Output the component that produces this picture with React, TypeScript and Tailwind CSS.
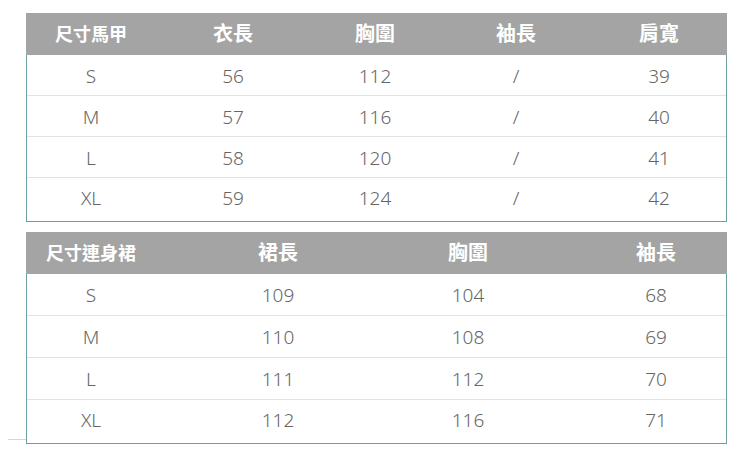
import React from "react";

const font = { fontFamily: '"Noto Sans", "Noto Sans CJK TC", sans-serif' };

const vestCols = ["w-[130px]", "w-[154px]", "w-[130px]", "w-[152px]", "w-[134px]"];
const dressCols = ["w-[130px]", "w-[244px]", "w-[136px]", "w-[190px] pl-[50px]"];

const vestHead = ["尺寸馬甲", "衣長", "胸圍", "袖長", "肩寬"];
const vestRows = [
  ["S", "56", "112", "/", "39"],
  ["M", "57", "116", "/", "40"],
  ["L", "58", "120", "/", "41"],
  ["XL", "59", "124", "/", "42"],
];

const dressHead = ["尺寸連身裙", "裙長", "胸圍", "袖長"];
const dressRows = [
  ["S", "109", "104", "68"],
  ["M", "110", "108", "69"],
  ["L", "111", "112", "70"],
  ["XL", "112", "116", "71"],
];

interface SizeTableProps {
  cols: string[];
  head: string[];
  rows: string[][];
  rowH: string;
}

const SizeTable: React.FC<SizeTableProps> = ({ cols, head, rows, rowH }) => {
  return (
    <div className="w-[701px]">
      <div className="flex h-[42px] items-center bg-[#a4a4a4] text-white font-bold">
        {head.map((h, i) => (
          <div
            key={h}
            className={`${cols[i]} text-center ${i === 0 ? "text-[18px]" : "text-[20px]"}`}
          >
            {h}
          </div>
        ))}
      </div>
      <div className="border-x border-b border-[#6d9fa1]">
        {rows.map((r, ri) => (
          <div
            key={r[0]}
            className={`flex items-center pt-[2px] text-[19px] text-[#666] font-light ${
              ri < rows.length - 1 ? `${rowH} border-b border-[#e2e2e2]` : "h-[43px] pb-1"
            }`}
          >
            {r.map((c, i) => (
              <div key={i} className={`${cols[i]} text-center ${i === 0 ? "-ml-px" : ""}`}>
                {c}
              </div>
            ))}
          </div>
        ))}
      </div>
    </div>
  );
};

export default function App() {
  return (
    <div className="w-[750px] h-[468px] bg-white pt-[13px] pl-[26px]" style={font}>
      <SizeTable cols={vestCols} head={vestHead} rows={vestRows} rowH="h-[41px]" />
      <div className="relative mt-[10px]">
        <SizeTable cols={dressCols} head={dressHead} rows={dressRows} rowH="h-[42px]" />
        <div className="absolute left-[-18px] bottom-[4px] w-[18px] h-px bg-[#d6d6d6]" />
      </div>
    </div>
  );
}
